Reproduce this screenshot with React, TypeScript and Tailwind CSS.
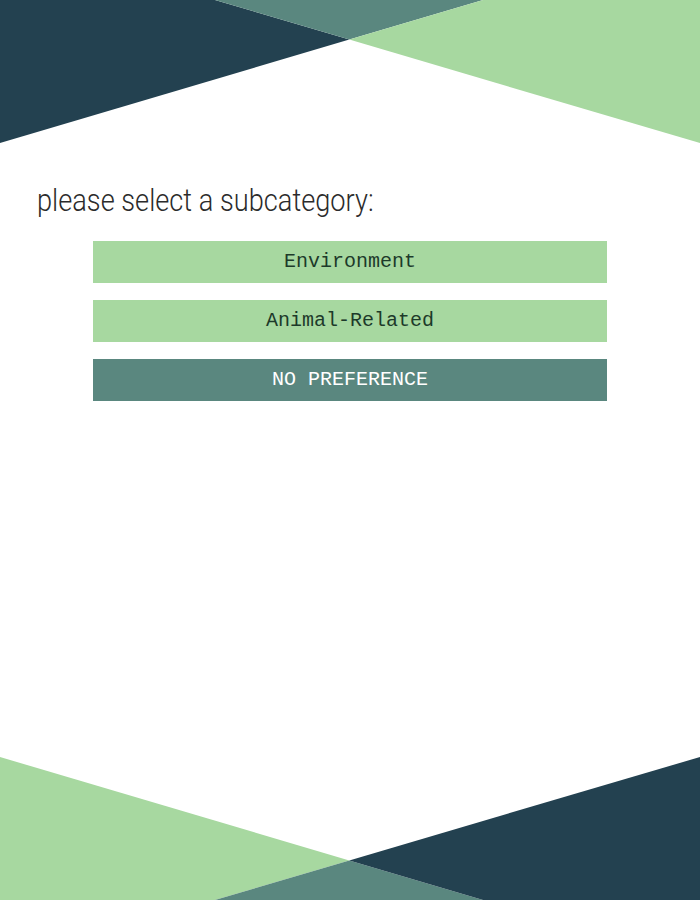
import { useState } from "react";

const options = ["Environment", "Animal-Related"];

function TopShapes() {
  return (
    <svg
      className="block w-full h-[143px]"
      viewBox="0 0 700 143"
      preserveAspectRatio="none"
      aria-hidden="true"
    >
      <polygon points="0,0 215,0 349.3,39.6 0,143" fill="#234150" />
      <polygon points="215,0 483,0 349.3,39.6" fill="#5a877f" />
      <polygon points="483,0 700,0 700,143 349.3,39.6" fill="#a7d8a0" />
    </svg>
  );
}

function BottomShapes() {
  return (
    <svg
      className="block w-full h-[143px]"
      viewBox="0 0 700 143"
      preserveAspectRatio="none"
      aria-hidden="true"
    >
      <polygon points="0,0 349.3,103.4 215,143 0,143" fill="#a7d8a0" />
      <polygon points="215,143 349.3,103.4 483,143" fill="#5a877f" />
      <polygon points="700,0 700,143 483,143 349.3,103.4" fill="#234150" />
    </svg>
  );
}

function App() {
  const [picked, setPicked] = useState<string | null>(null);

  return (
    <div className="h-screen bg-white flex flex-col overflow-hidden">
      <TopShapes />
      <main className="flex-1">
        <div className="mt-[37px] pl-[37px]">
          <h1
            className="text-[32px] leading-[40px] font-light text-[#2b2b2b] origin-left scale-x-[0.85] whitespace-nowrap"
            style={{ fontFamily: "Roboto, 'Liberation Sans', sans-serif" }}
          >
            please select a subcategory:
          </h1>
        </div>
        <div className="mt-[21px] mx-[93px] flex flex-col gap-[17px]">
          {options.map((opt) => (
            <button
              key={opt}
              onClick={() => setPicked(opt)}
              className={`h-[42px] w-full bg-[#a7d8a0] text-[#1d3a2a] text-[20px] ${
                picked === opt ? "outline outline-2 outline-[#5a877f]" : ""
              }`}
              style={{ fontFamily: "'Liberation Mono', 'Courier New', monospace" }}
            >
              {opt}
            </button>
          ))}
          <button
            onClick={() => setPicked("none")}
            className="h-[42px] w-full bg-[#5a877f] text-white text-[20px]"
            style={{ fontFamily: "'Liberation Mono', 'Courier New', monospace" }}
          >
            NO PREFERENCE
          </button>
        </div>
      </main>
      <BottomShapes />
    </div>
  );
}

export default App;
